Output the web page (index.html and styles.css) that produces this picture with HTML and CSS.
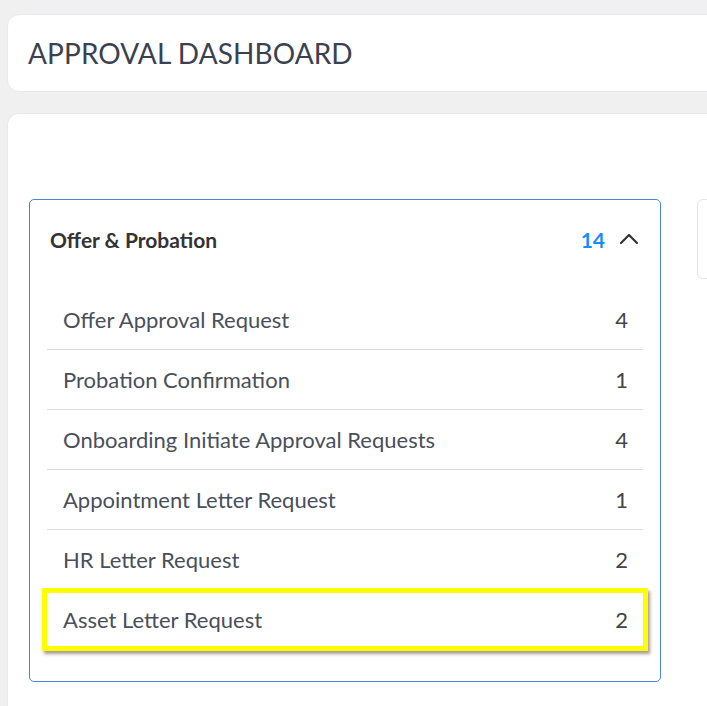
FILE: index.html
```html
<!DOCTYPE html>
<html lang="en">
<head>
    <meta charset="UTF-8">
    <meta name="viewport" content="width=device-width, initial-scale=1.0">
    <title>Approval Dashboard</title>
    <link rel="stylesheet" href="styles.css">
</head>
<body>
    <div class="page-header">
        <h1>APPROVAL DASHBOARD</h1>
    </div>

    <div class="main-card">
        <div class="cards-row">
            <!-- Offer & Probation group -->
            <div class="group-card">
                <div class="group-head">
                    <span class="group-title">Offer &amp; Probation</span>
                    <span class="group-meta">
                        <span class="group-count">14</span>
                        <svg class="chevron" width="20" height="12" viewBox="0 0 20 12">
                            <path d="M2 10 L10 2 L18 10" fill="none" stroke="#333" stroke-width="2.2" stroke-linecap="round" stroke-linejoin="round"/>
                        </svg>
                    </span>
                </div>
                <ul class="request-list">
                    <li><span>Offer Approval Request</span><span class="num">4</span></li>
                    <li><span>Probation Confirmation</span><span class="num">1</span></li>
                    <li><span>Onboarding Initiate Approval Requests</span><span class="num">4</span></li>
                    <li><span>Appointment Letter Request</span><span class="num">1</span></li>
                    <li><span>HR Letter Request</span><span class="num">2</span></li>
                    <li class="highlighted"><span>Asset Letter Request</span><span class="num">2</span></li>
                </ul>
            </div>

            <div class="side-card"></div>
        </div>
    </div>
</body>
</html>
```

FILE: styles.css
```css
body {
    font-family: 'Lato', 'Noto Sans', sans-serif;
    background-color: #f0f0f0;
    margin: 0;
    height: 100vh;
    overflow: hidden;
}

.page-header {
    background-color: white;
    margin: 14px -30px 0 7px;
    height: 76px;
    border: 1px solid #e8e8ee;
    border-radius: 12px;
    display: flex;
    align-items: center;
    padding-left: 20px;
}

.page-header h1 {
    margin: 0;
    font-size: 28px;
    font-weight: 400;
    color: #3b4150;
    letter-spacing: 0.1px;
}

.main-card {
    box-sizing: border-box;
    background-color: white;
    margin: 21px -30px 0 7px;
    height: 593px;
    border: 1px solid #e8e8ee;
    border-bottom: none;
    border-radius: 12px 12px 0 0;
    padding: 85px 0 0 21px;
}

.cards-row {
    display: flex;
    gap: 36px;
    align-items: flex-start;
}

.group-card {
    width: 630px;
    flex-shrink: 0;
    border: 1px solid #4a86d8;
    border-radius: 5px;
    padding-bottom: 32px;
}

.group-head {
    height: 78px;
    display: flex;
    justify-content: space-between;
    align-items: center;
    padding: 0 21px 0 20px;
}

.group-title {
    font-size: 21px;
    font-weight: 700;
    color: #333;
}

.group-meta {
    display: flex;
    align-items: center;
    gap: 14px;
}

.group-count {
    font-size: 21px;
    font-weight: 700;
    color: #1a8cff;
}

.chevron {
    display: block;
}

.request-list {
    list-style: none;
    margin: 12px 17px 0 17px;
    padding: 0;
}

.request-list li {
    height: 59px;
    display: flex;
    justify-content: space-between;
    align-items: center;
    padding: 0 15px 0 16px;
    font-size: 22px;
    color: #4a4f5a;
    border-bottom: 1px solid #dcdcdc;
    position: relative;
}

.request-list li:last-child {
    border-bottom: none;
}

.num {
    color: #444;
}

.highlighted::after {
    content: "";
    position: absolute;
    left: -5px;
    right: -5px;
    top: -2px;
    bottom: -2px;
    border: 5px solid #ffff00;
    box-shadow: 2px 3px 3px rgba(80, 60, 40, 0.5);
}

.side-card {
    width: 100px;
    height: 78px;
    border: 1px solid #e4e4ea;
    border-radius: 6px;
}
```
